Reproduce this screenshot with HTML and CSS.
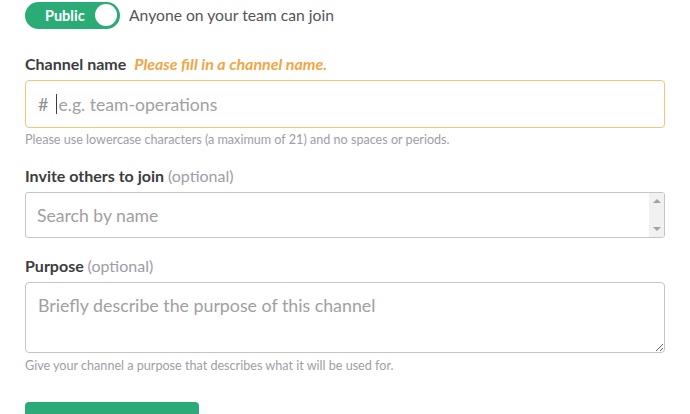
FILE: index.html
```html
<!DOCTYPE html>
<html>
<head>
<meta charset="utf-8">
<link rel="stylesheet" href="styles.css">
</head>
<body>
<div class="form">
  <div class="toggle-row">
    <div class="toggle">
      <span class="toggle-label">Public</span>
      <span class="knob"></span>
    </div>
    <span class="toggle-desc">Anyone on your team can join</span>
  </div>

  <div class="label label-first">Channel name <span class="warn">Please fill in a channel name.</span></div>
  <div class="field field-warn">
    <span class="hash">#</span><span class="caret"></span><span class="ph">e.g. team-operations</span>
  </div>
  <div class="hint">Please use lowercase characters (a maximum of 21) and no spaces or periods.</div>

  <div class="label">Invite others to join <span class="opt">(optional)</span></div>
  <div class="field field-select">
    <span class="ph ph-search">Search by name</span>
    <div class="scrollbar">
      <span class="arrow up"></span>
      <span class="arrow down"></span>
    </div>
  </div>

  <div class="label">Purpose <span class="opt">(optional)</span></div>
  <textarea class="purpose" placeholder="Briefly describe the purpose of this channel"></textarea>
  <div class="hint hint-purpose">Give your channel a purpose that describes what it will be used for.</div>

  <div class="button"></div>
</div>
</body>
</html>
```

FILE: styles.css
```css
html, body {
  margin: 0;
  padding: 0;
  background: #ffffff;
  overflow: hidden;
  height: 414px;
}
body {
  font-family: Lato, "Open Sans", sans-serif;
  color: #3d3c40;
}
.form {
  width: 640px;
  padding: 1px 0 0 25px;
  display: flex;
  flex-direction: column;
}
.toggle-row {
  display: flex;
  align-items: center;
  height: 28px;
}
.toggle {
  width: 95px;
  height: 27px;
  border-radius: 14px;
  background: #2bac76;
  display: flex;
  align-items: center;
  justify-content: space-between;
  padding: 0 3px 0 20px;
  box-sizing: border-box;
}
.toggle-label {
  color: #ffffff;
  font-weight: 700;
  font-size: 14.5px;
}
.knob {
  width: 22px;
  height: 22px;
  border-radius: 50%;
  background: #ffffff;
}
.toggle-desc {
  margin-left: 9px;
  font-size: 15.7px;
  color: #555459;
}
.label {
  font-size: 16px;
  font-weight: 700;
  line-height: 20px;
  margin-top: 18px;
  margin-bottom: 6px;
  color: #3d3c40;
}
.label-first {
  margin-top: 25px;
}
.warn {
  color: #f2a544;
  font-style: italic;
  margin-left: 4px;
}
.opt {
  font-weight: 400;
  color: #9e9ea6;
}
.field {
  box-sizing: border-box;
  width: 640px;
  border: 1px solid #c5c5c5;
  border-radius: 4px;
  display: flex;
  align-items: center;
  font-size: 17.6px;
}
.field-warn {
  height: 48px;
  border-color: #f5c57c;
  padding-left: 12px;
}
.hash {
  color: #8f8f94;
  font-size: 18px;
}
.caret {
  width: 1px;
  height: 20px;
  background: #3d3c40;
  margin-left: 8px;
  margin-right: 1px;
}
.ph {
  color: #a0a0a2;
}
.field-select {
  height: 46px;
  padding-left: 11px;
  justify-content: space-between;
  border-radius: 3px;
  overflow: hidden;
}
.scrollbar {
  width: 15px;
  align-self: stretch;
  background: #f1f1f1;
  display: flex;
  flex-direction: column;
  justify-content: space-between;
  align-items: center;
  padding: 6px 0;
  box-sizing: border-box;
}
.arrow {
  width: 0;
  height: 0;
  border-left: 4px solid transparent;
  border-right: 4px solid transparent;
}
.arrow.up {
  border-bottom: 4px solid #a3a3a3;
}
.arrow.down {
  border-top: 4px solid #a3a3a3;
}
.hint {
  font-size: 12.6px;
  line-height: 16px;
  color: #9e9ea6;
  margin-top: 4px;
}
.purpose {
  box-sizing: border-box;
  width: 640px;
  height: 71px;
  border: 1px solid #c5c5c5;
  border-radius: 4px;
  font-family: Lato, "Open Sans", sans-serif;
  font-size: 17.8px;
  padding: 11px 12px;
  margin: 0;
  display: block;
  color: #3d3c40;
  resize: vertical;
}
.purpose::placeholder {
  color: #a0a0a2;
}
.hint-purpose {
  margin-top: 5px;
}
.button {
  margin-top: 28px;
  width: 174px;
  height: 40px;
  background: #2bac76;
  border-radius: 4px;
}
```
